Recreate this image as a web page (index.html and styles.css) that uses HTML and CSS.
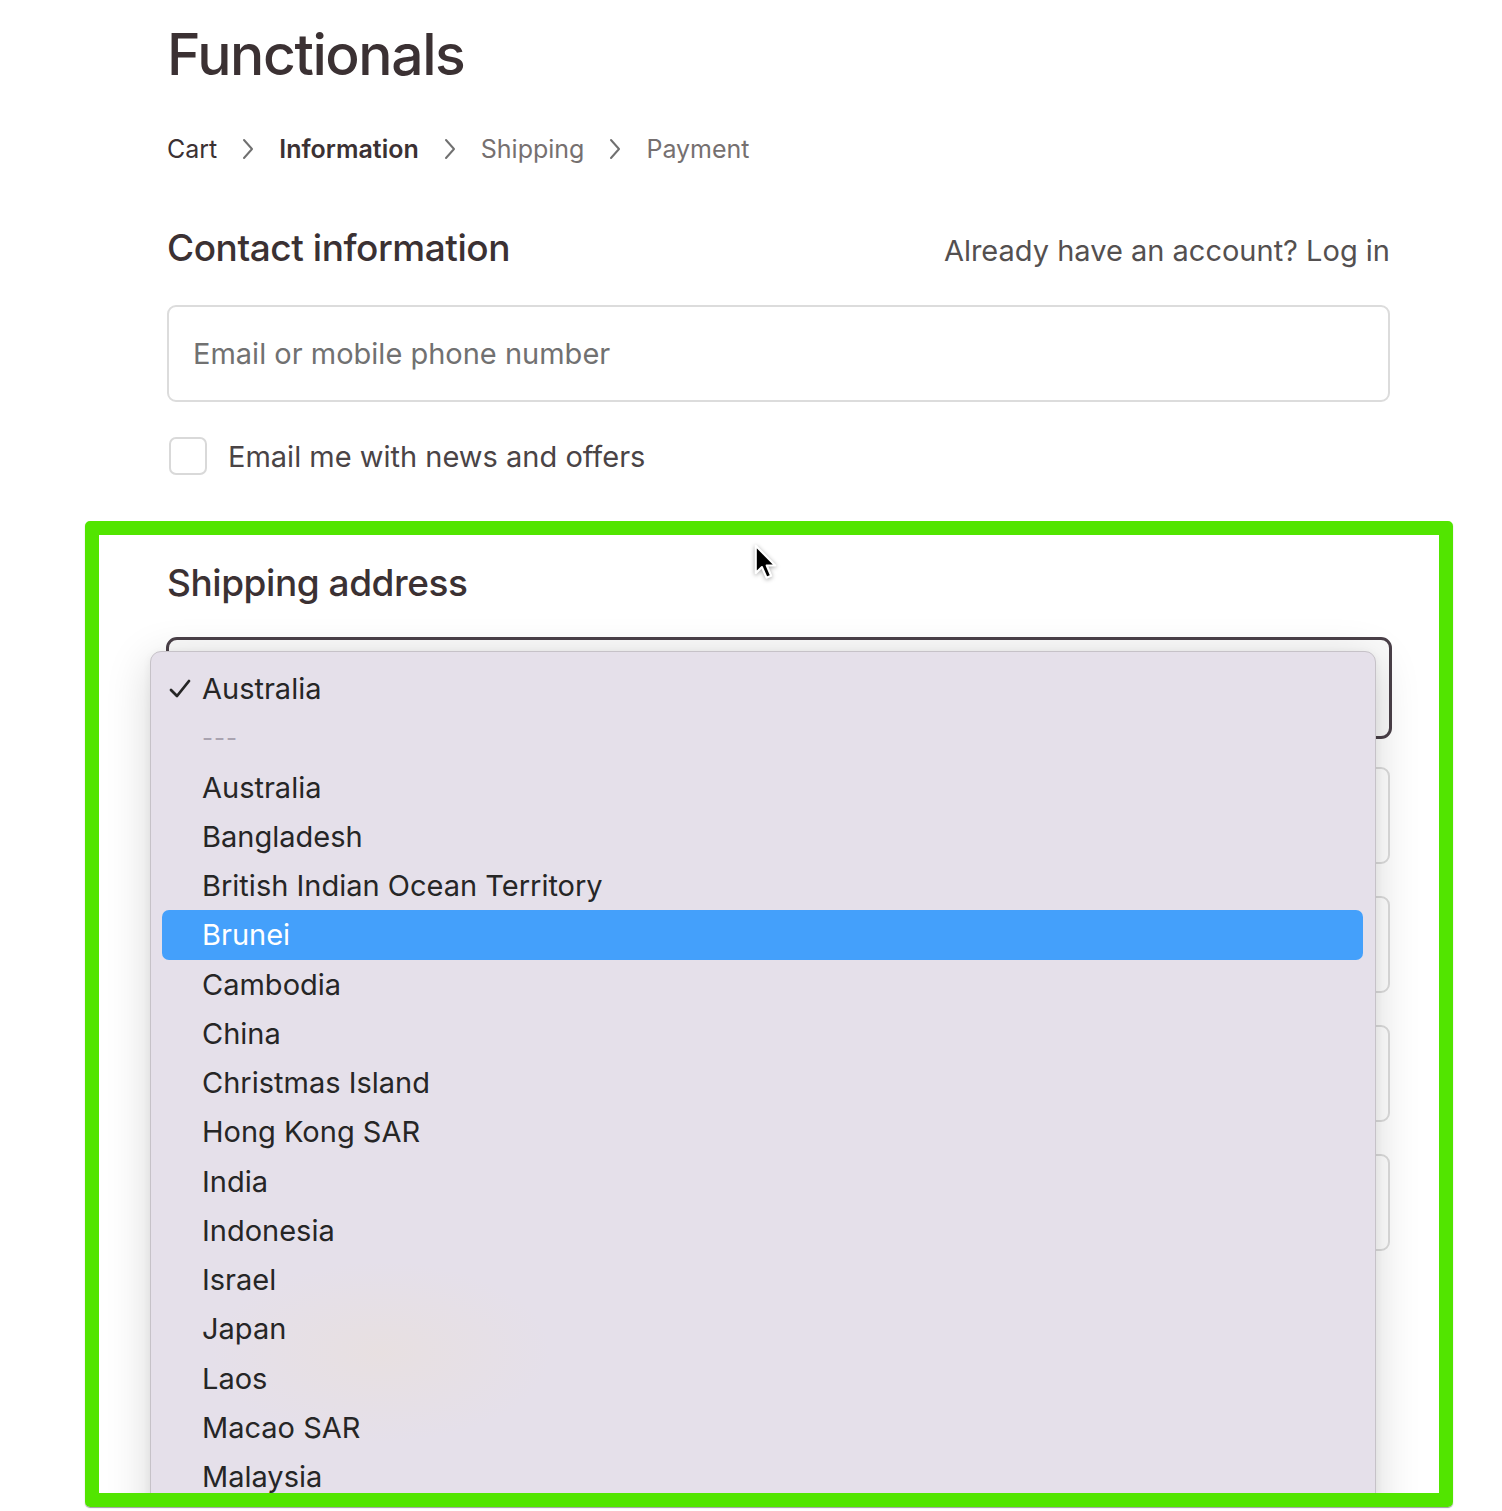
FILE: index.html
```html
<!DOCTYPE html>
<html lang="en">
<head>
<meta charset="utf-8">
<title>Functionals – Information</title>
<link rel="stylesheet" href="styles.css">
</head>
<body>
<div class="page">
  <h1 class="brand">Functionals</h1>
  <nav class="crumbs">
    <span class="crumb done">Cart</span>
    <svg class="chev" viewBox="0 0 12 22" width="12" height="22"><path d="M2 2 L10 11 L2 20" fill="none" stroke="#707070" stroke-width="2" stroke-linecap="round" stroke-linejoin="round"/></svg>
    <span class="crumb current">Information</span>
    <svg class="chev" viewBox="0 0 12 22" width="12" height="22"><path d="M2 2 L10 11 L2 20" fill="none" stroke="#707070" stroke-width="2" stroke-linecap="round" stroke-linejoin="round"/></svg>
    <span class="crumb todo">Shipping</span>
    <svg class="chev" viewBox="0 0 12 22" width="12" height="22"><path d="M2 2 L10 11 L2 20" fill="none" stroke="#707070" stroke-width="2" stroke-linecap="round" stroke-linejoin="round"/></svg>
    <span class="crumb todo">Payment</span>
  </nav>
  <section class="contact">
    <div class="section-head">
      <h2 class="section-title">Contact information</h2>
      <p class="login">Already have an account? Log in</p>
    </div>
    <div class="field"><span class="placeholder">Email or mobile phone number</span></div>
    <label class="check"><span class="box"></span><span class="check-label">Email me with news and offers</span></label>
  </section>
</div>

<div class="frame">
  <h2 class="section-title">Shipping address</h2>
  <div class="select"></div>
  <div class="field under first"></div>
  <div class="field under"></div>
  <div class="field under"></div>
  <div class="field under"></div>

  <div class="menu">
    <div class="item selected"><svg class="tick" viewBox="0 0 24 20" width="24" height="20"><path d="M3 11 L9 17 L21 2" fill="none" stroke="#262626" stroke-width="2.8" stroke-linecap="round" stroke-linejoin="round"/></svg>Australia</div>
    <div class="item sep">---</div>
    <div class="item">Australia</div>
    <div class="item">Bangladesh</div>
    <div class="item">British Indian Ocean Territory</div>
    <div class="item active">Brunei</div>
    <div class="item">Cambodia</div>
    <div class="item">China</div>
    <div class="item">Christmas Island</div>
    <div class="item">Hong Kong SAR</div>
    <div class="item">India</div>
    <div class="item">Indonesia</div>
    <div class="item">Israel</div>
    <div class="item">Japan</div>
    <div class="item">Laos</div>
    <div class="item">Macao SAR</div>
    <div class="item">Malaysia</div>
  </div>

  <svg class="cursor" viewBox="0 0 14 22" width="25" height="39"><path d="M1.5 1.5 L1.5 17 L5 13.6 L7.6 19.6 L10.2 18.5 L7.7 12.7 L12.5 12.7 Z" fill="#000" stroke="#fff" stroke-width="1.2" stroke-linejoin="round"/></svg>
</div>
</body>
</html>
```

FILE: styles.css
```css
* { box-sizing: border-box; }

html, body {
  margin: 0;
  padding: 0;
  background: #ffffff;
  overflow: hidden;
}

body {
  font-family: "Inter", "Noto Sans", sans-serif;
  color: #3b3133;
  width: 1502px;
  height: 1511px;
}

.page {
  padding: 20px 0 0 167px;
  width: 1390px;
}

.brand {
  margin: 0;
  font-size: 57px;
  line-height: 70px;
  font-weight: 500;
  letter-spacing: -0.025em;
  color: #3b3133;
}

.crumbs {
  margin-top: 44px;
  display: flex;
  align-items: center;
  gap: 25px;
  height: 30px;
  font-size: 25px;
  line-height: 30px;
}

.chev { display: block; }

.crumb.done { color: #3b3133; }
.crumb.current { color: #3b3133; font-weight: 600; }
.crumb.todo { color: #767070; }

.contact { margin-top: 62px; }

.section-head {
  display: flex;
  justify-content: space-between;
  align-items: baseline;
}

.section-title {
  margin: 0;
  font-size: 37px;
  line-height: 44px;
  font-weight: 500;
  color: #3b3133;
  letter-spacing: -0.012em;
}

.login {
  margin: 0;
  font-size: 29px;
  color: #545050;
}

.field {
  margin-top: 35px;
  height: 97px;
  border: 2px solid #dcdcdc;
  border-radius: 9px;
  background: #fff;
  display: flex;
  align-items: center;
  padding-left: 24px;
}

.placeholder {
  font-size: 29px;
  color: #717171;
}

.check {
  margin-top: 35px;
  display: flex;
  align-items: center;
  gap: 21px;
  height: 38px;
  padding-left: 2px;
}

.box {
  width: 38px;
  height: 38px;
  border: 2px solid #d9d9d9;
  border-radius: 7px;
  background: #fff;
}

.check-label {
  font-size: 29px;
  color: #4a4446;
}

/* annotation frame */
.frame {
  position: relative;
  margin: 46px 0 0 85px;
  width: 1368px;
  height: 986px;
  border: 14px solid #52e500;
  border-radius: 5px;
  padding: 26px 49px 0 68px;
  overflow: hidden;
  box-shadow: 0 1px 1px rgba(60,60,60,0.5);
}

.select {
  margin: 32px -2px 0 -1px;
  height: 102px;
  border: 3px solid #4a4048;
  border-radius: 11px;
  background: #fafafa;
}

.field.under { margin-top: 32px; }
.field.under.first { margin-top: 28px; }

.menu {
  position: absolute;
  left: 51px;
  top: 116px;
  width: 1226px;
  height: 900px;
  padding: 12px 12px 0 11px;
  background:
    radial-gradient(ellipse 170px 90px at 230px 700px, rgba(232,224,224,0.9), rgba(229,224,234,0) 100%),
    #e5e0ea;
  border: 1px solid #c6c2c8;
  border-radius: 11px;
  box-shadow: 0 10px 45px rgba(0,0,0,0.16), 0 2px 8px rgba(0,0,0,0.06);
}

.item {
  position: relative;
  height: 49.25px;
  line-height: 49.25px;
  padding-left: 40px;
  font-size: 29px;
  color: #262626;
  border-radius: 7px;
  white-space: nowrap;
}

.item.sep {
  color: #a9a3b0;
  font-size: 24px;
  letter-spacing: 1px;
}

.item.active {
  background: #44a0fb;
  color: #ffffff;
}

.tick {
  position: absolute;
  left: 6px;
  top: 15px;
}

.cursor {
  position: absolute;
  left: 654px;
  top: 8px;
  filter: drop-shadow(0 1px 2px rgba(0,0,0,0.35));
}
```
